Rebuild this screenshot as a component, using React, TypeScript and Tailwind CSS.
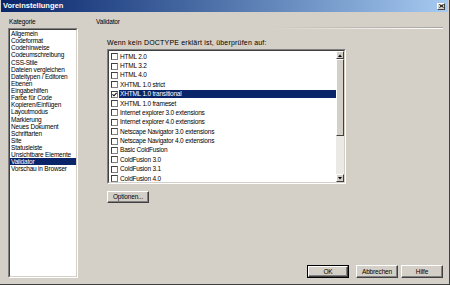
import React from "react";

const cats = [
  "Allgemein",
  "Codeformat",
  "Codehinweise",
  "Codeumschreibung",
  "CSS-Stile",
  "Dateien vergleichen",
  "Dateitypen / Editoren",
  "Ebenen",
  "Eingabehilfen",
  "Farbe für Code",
  "Kopieren/Einfügen",
  "Layoutmodus",
  "Markierung",
  "Neues Dokument",
  "Schriftarten",
  "Site",
  "Statusleiste",
  "Unsichtbare Elemente",
  "Validator",
  "Vorschau in Browser",
];

const docs = [
  "HTML 2.0",
  "HTML 3.2",
  "HTML 4.0",
  "XHTML 1.0 strict",
  "XHTML 1.0 transitional",
  "XHTML 1.0 frameset",
  "Internet explorer 3.0 extensions",
  "Internet explorer 4.0 extensions",
  "Netscape Navigator 3.0 extensions",
  "Netscape Navigator 4.0 extensions",
  "Basic ColdFusion",
  "ColdFusion 3.0",
  "ColdFusion 3.1",
  "ColdFusion 4.0",
];

function Btn({ label, def }: { label: string; def?: boolean }) {
  return (
    <div className={def ? "border border-black" : ""}>
      <div
        className={`${def ? "w-[40px] h-[11px]" : "w-[42px] h-[13px]"} flex items-center justify-center border border-t-white border-l-white border-b-[#404040] border-r-[#404040] shadow-[inset_-1px_-1px_0_#808080] bg-[#d4d0c8] text-[6.5px] tracking-[-0.15px] text-black`}
      >
        {label}
      </div>
    </div>
  );
}

function ScrollBtn({ up }: { up?: boolean }) {
  return (
    <div className="h-[8px] w-[8px] flex items-center justify-center border border-t-white border-l-white border-b-[#404040] border-r-[#404040] bg-[#d4d0c8]">
      <svg width="4" height="3" viewBox="0 0 4 3">
        {up ? <polygon points="0,3 4,3 2,0.5" fill="#000" /> : <polygon points="0,0 4,0 2,2.5" fill="#000" />}
      </svg>
    </div>
  );
}

export default function App() {
  return (
    <div
      className="w-[450px] h-[285px] bg-[#d4d0c8] border-r border-b border-[#404040] flex flex-col overflow-hidden"
      style={{ fontFamily: '"Liberation Sans", Arial, sans-serif' }}
    >
      <div className="h-[12px] shrink-0 mx-[1px] bg-gradient-to-r from-[#0a246a] to-[#a6caf0] flex items-center justify-between pl-[2px] pr-[3px]">
        <span className="text-white font-bold text-[7.5px] leading-none">Voreinstellungen</span>
        <div className="w-[8px] h-[7px] flex items-center justify-center border border-t-white border-l-white border-b-[#404040] border-r-[#404040] bg-[#d4d0c8]">
          <svg width="5" height="4" viewBox="0 0 5 4">
            <path d="M0.5 0.5 L4.5 3.5 M4.5 0.5 L0.5 3.5" stroke="#000" strokeWidth="1" />
          </svg>
        </div>
      </div>
      <div className="flex-1 flex pl-[8px] pr-[6px] pt-[6px] pb-[6px] gap-[18px] text-black">
        <div className="w-[70px] flex flex-col">
          <div className="h-[8px] text-[6.5px] tracking-[-0.15px] leading-[8px] pl-[1px]">Kategorie</div>
          <div className="mt-[2px] flex-1 border border-t-[#808080] border-l-[#808080] border-b-white border-r-white">
            <div className="h-full bg-white border border-t-[#404040] border-l-[#404040] border-b-[#d4d0c8] border-r-[#d4d0c8]">
              {cats.map((c) => (
                <div
                  key={c}
                  className={`h-[7.13px] leading-[7.13px] text-[6.5px] tracking-[-0.2px] pl-[1px] whitespace-nowrap ${
                    c === "Validator" ? "bg-[#0a246a] text-white" : ""
                  }`}
                >
                  {c}
                </div>
              ))}
            </div>
          </div>
        </div>
        <div className="flex-1 flex flex-col">
          <div className="h-[8px] text-[6.5px] tracking-[-0.15px] leading-[8px]">Validator</div>
          <div className="mt-[1px] h-[1px] bg-gradient-to-r from-[#d4d0c8] via-[#d4d0c8] to-[#a8a59e]" />
          <div className="h-[1px] bg-gradient-to-r from-[#d4d0c8] via-[#d4d0c8] to-white" />
          <div className="pl-[11px] flex flex-col">
            <div className="mt-[10px] h-[8px] text-[7px] tracking-[0.2px] leading-[8px] whitespace-nowrap">
              Wenn kein DOCTYPE erklärt ist, überprüfen auf:
            </div>
            <div className="mt-[2px] w-[239px] h-[135px] border border-t-[#808080] border-l-[#808080] border-b-white border-r-white">
              <div className="h-full flex bg-white border border-t-[#404040] border-l-[#404040] border-b-[#d4d0c8] border-r-[#d4d0c8]">
                <div className="flex-1 pt-[1px] pl-[2px]">
                  {docs.map((d) => {
                    const sel = d === "XHTML 1.0 transitional";
                    return (
                      <div key={d} className="h-[9.38px] flex items-center">
                        <div className="w-[7px] h-[7px] shrink-0 bg-white border border-t-[#404040] border-l-[#404040] border-b-[#808080] border-r-[#808080] flex items-center justify-center">
                          {sel && (
                            <svg width="5" height="5" viewBox="0 0 5 5">
                              <path d="M0.5 2.3 L2 3.8 L4.6 0.8" stroke="#000" strokeWidth="1.1" fill="none" />
                            </svg>
                          )}
                        </div>
                        <div
                          className={`ml-[1px] flex-1 h-[8px] leading-[8px] text-[6.5px] tracking-[-0.2px] pl-[1px] whitespace-nowrap ${
                            sel ? "bg-[#0a246a] text-white" : ""
                          }`}
                        >
                          {d}
                        </div>
                      </div>
                    );
                  })}
                </div>
                <div className="w-[8px] flex flex-col">
                  <ScrollBtn up />
                  <div className="h-[77px] border border-t-white border-l-white border-b-[#404040] border-r-[#404040] bg-[#d4d0c8]" />
                  <div className="flex-1 bg-[#ebe9e5]" />
                  <ScrollBtn />
                </div>
              </div>
            </div>
            <div className="mt-[7px]">
              <div className="w-[42px] h-[12px] flex items-center justify-center border border-t-white border-l-white border-b-[#404040] border-r-[#404040] shadow-[inset_-1px_-1px_0_#808080] text-[6.5px] tracking-[-0.15px]">
                Optionen...
              </div>
            </div>
          </div>
          <div className="flex-1" />
          <div className="flex justify-end gap-[3px]">
            <Btn label="OK" def />
            <div className="w-[1px]" />
            <Btn label="Abbrechen" />
            <Btn label="Hilfe" />
          </div>
        </div>
      </div>
    </div>
  );
}
